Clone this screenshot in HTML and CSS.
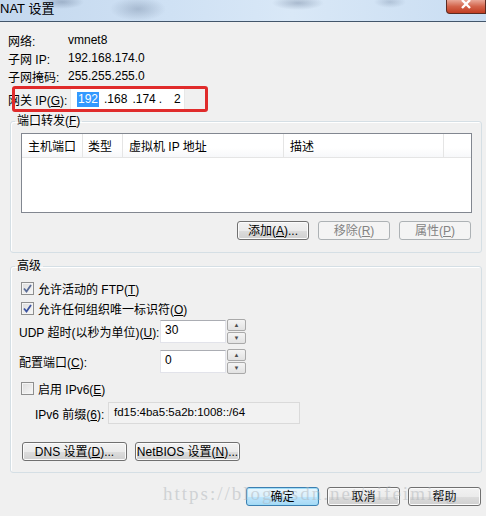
FILE: index.html
```html
<!DOCTYPE html>
<html lang="zh-CN">
<head>
    <meta charset="UTF-8">
    <title>NAT 设置</title>
    <link rel="stylesheet" href="styles.css">
</head>
<body>
    <div class="window">
        <div class="titlebar">
            <span class="title">NAT 设置</span>
            <span class="close">
                <svg width="12" height="9" viewBox="0 0 12 9"><path d="M2 0 L10 8 M10 0 L2 8" stroke="#fff" stroke-width="2.4" fill="none"/></svg>
            </span>
        </div>

        <div class="content">
            <div class="info">
                <div class="info-row"><span class="info-label">网络:</span><span>vmnet8</span></div>
                <div class="info-row"><span class="info-label">子网 IP:</span><span>192.168.174.0</span></div>
                <div class="info-row"><span class="info-label">子网掩码:</span><span>255.255.255.0</span></div>
                <div class="info-row gateway">
                    <span class="info-label">网关 IP(<u>G</u>):</span>
                    <div class="ip-box">
                        <span class="sel">192</span><span class="oct o2">.168</span><span class="oct o3">.174</span><span class="oct o4">.</span><span class="oct o5">2</span>
                    </div>
                    <div class="highlight"></div>
                </div>
            </div>

            <fieldset class="group forward">
                <legend>端口转发(<u>F</u>)</legend>
                <div class="listview">
                    <div class="list-head">
                        <span class="col c1">主机端口</span>
                        <span class="col c2">类型</span>
                        <span class="col c3">虚拟机 IP 地址</span>
                        <span class="col c4">描述</span>
                        <span class="col c5"></span>
                    </div>
                </div>
                <div class="btn-row">
                    <button class="btn">添加(<u>A</u>)...</button>
                    <button class="btn disabled">移除(<u>R</u>)</button>
                    <button class="btn disabled">属性(<u>P</u>)</button>
                </div>
            </fieldset>

            <fieldset class="group advanced">
                <legend>高级</legend>
                <div class="check-row">
                    <span class="checkbox">
                        <svg width="9" height="9" viewBox="0 0 9 9"><path d="M1 4.5 L3.5 7.5 L8 1" stroke="#5a6c96" stroke-width="1.8" fill="none"/></svg>
                    </span>
                    <span>允许活动的 FTP(<u>T</u>)</span>
                </div>
                <div class="check-row second">
                    <span class="checkbox">
                        <svg width="9" height="9" viewBox="0 0 9 9"><path d="M1 4.5 L3.5 7.5 L8 1" stroke="#3b53a0" stroke-width="1.8" fill="none"/></svg>
                    </span>
                    <span>允许任何组织唯一标识符(<u>O</u>)</span>
                </div>
                <div class="field-row udp">
                    <span class="field-label">UDP 超时(以秒为单位)(<u>U</u>):</span>
                    <span class="edit">30</span>
                    <span class="spinner"><span class="spin up">&#9650;</span><span class="spin down">&#9660;</span></span>
                </div>
                <div class="field-row port">
                    <span class="field-label">配置端口(<u>C</u>):</span>
                    <span class="edit">0</span>
                    <span class="spinner"><span class="spin up">&#9650;</span><span class="spin down">&#9660;</span></span>
                </div>
                <div class="check-row ipv6">
                    <span class="checkbox"></span>
                    <span>启用 IPv6(<u>E</u>)</span>
                </div>
                <div class="prefix-row">
                    <span class="prefix-label">IPv6 前缀(<u>6</u>):</span>
                    <span class="prefix-box">fd15:4ba5:5a2b:1008::/64</span>
                </div>
                <div class="dns-row">
                    <button class="btn wide">DNS 设置(<u>D</u>)...</button>
                    <button class="btn wide">NetBIOS 设置(<u>N</u>)...</button>
                </div>
            </fieldset>

            <div class="footer">
                <button class="btn default">确定</button>
                <button class="btn">取消</button>
                <button class="btn">帮助</button>
            </div>
        </div>

        <div class="watermark">https://blog.csdn.net/aifeiming</div>
    </div>
</body>
</html>
```

FILE: styles.css
```css
body {
    margin: 0;
    padding: 0;
    background-color: #f0f0f0;
    font-family: "Liberation Sans", "Noto Sans CJK SC", sans-serif;
    font-size: 12px;
    color: #000;
}
u {
    text-decoration: underline;
    text-underline-offset: 1px;
}
.window {
    position: relative;
    width: 486px;
    height: 516px;
    overflow: hidden;
}
.titlebar {
    height: 21px;
    border-bottom: 1px solid #43566b;
    display: flex;
    justify-content: space-between;
    align-items: flex-start;
    background:
        radial-gradient(ellipse 22px 7px at 62px 2px, rgba(80, 100, 130, 0.35), transparent),
        radial-gradient(ellipse 28px 12px at 138px 9px, rgba(80, 100, 130, 0.3), transparent),
        radial-gradient(ellipse 26px 7px at 298px 3px, rgba(80, 100, 130, 0.35), transparent),
        radial-gradient(ellipse 16px 6px at 390px 2px, rgba(80, 100, 130, 0.25), transparent),
        linear-gradient(90deg, #c4d8ee 0%, #cfe1f4 35%, #d9e8f7 60%, #c9ddf2 100%);
}
.title {
    font-size: 13px;
    line-height: 17px;
}
.close {
    width: 38px;
    height: 13px;
    border: 1px solid #5b2b22;
    border-top: none;
    border-radius: 0 0 0 4px;
    background: linear-gradient(#e9a898, #d3634a 50%, #c13d22);
    display: flex;
    justify-content: center;
    align-items: flex-start;
}
.content {
    padding: 0 4px 0 8px;
}
.info {
    padding-top: 9px;
}
.info-row {
    display: flex;
    align-items: center;
    height: 18px;
}
.info-label {
    width: 60px;
    flex-shrink: 0;
}
.gateway {
    position: relative;
    height: 22px;
    margin-top: 3px;
}
.ip-box {
    margin-left: 2px;
    width: 107px;
    height: 20px;
    border: 1px solid #e8e8e8;
    background: #fff;
    display: flex;
    align-items: center;
    padding-left: 6px;
}
.sel {
    background: #3399ff;
    color: #fff;
    padding: 0 1px;
    line-height: 15px;
}
.o2 { margin-left: 5px; }
.o3 { margin-left: 5px; }
.o4 { margin-left: 3px; }
.o5 { margin-left: 12px; }
.highlight {
    position: absolute;
    left: 4px;
    top: -2px;
    width: 196px;
    height: 26px;
    border: 3px solid #e02b2b;
    border-radius: 3px;
    box-sizing: border-box;
}
.group {
    margin: 0 0 0 2px;
    border: 1px solid #d5dfe5;
    border-radius: 3px;
    padding: 4px 4px 12px 4px;
    box-shadow: inset 1px 1px 0 #fff;
}
.group legend {
    padding: 0 2px;
    line-height: 16px;
}
.forward {
    margin-top: 3px;
}
.listview {
    margin: 0 5px 0 6px;
    height: 78px;
    border: 1px solid #828790;
    background: #fff;
}
.list-head {
    display: flex;
    height: 23px;
    border-bottom: 1px solid #e5e5e5;
    background: linear-gradient(#ffffff, #ffffff 60%, #f7f8fa);
}
.col {
    display: flex;
    align-items: center;
    padding-left: 6px;
    border-right: 1px solid #e5e5e5;
    box-sizing: border-box;
}
.c1 { width: 61px; }
.c2 { width: 40px; padding-left: 5px; }
.c3 { width: 161px; }
.c4 { width: 160px; }
.c5 { flex: 1; border-right: none; }
.btn {
    font-family: "Liberation Sans", "Noto Sans CJK SC", sans-serif;
    font-size: 12px;
    height: 19px;
    width: 72px;
    padding: 0;
    border: 1px solid #707070;
    border-radius: 3px;
    background: linear-gradient(#f2f2f2 0%, #ebebeb 50%, #dddddd 51%, #cfcfcf 100%);
    box-shadow: inset 0 0 0 1px #fbfbfb;
    color: #000;
    line-height: 16px;
}
.btn.disabled {
    border-color: #adb2b5;
    background: #f4f4f4;
    box-shadow: none;
    color: #838383;
}
.btn.default {
    border-color: #3c7fb1;
    box-shadow: inset 0 0 0 1px #9fdcf7;
    background: linear-gradient(#eaf6fd 0%, #d9f0fc 50%, #bee6fd 51%, #a7d9f5 100%);
}
.btn-row {
    display: flex;
    justify-content: flex-end;
    gap: 9px;
    margin: 8px 6px 0 0;
}
.advanced {
    margin-top: 5px;
    padding: 5px 4px 11px 4px;
}
.check-row {
    display: flex;
    align-items: center;
    height: 18px;
    margin-left: 6px;
    gap: 4px;
}
.check-row.second {
    margin-top: 2px;
}
.check-row.ipv6 {
    margin-top: 6px;
}
.checkbox {
    width: 11px;
    height: 11px;
    border: 1px solid #8e8f8f;
    background: linear-gradient(135deg, #dcdcdc, #f8f8f8);
    box-shadow: inset 0 0 0 1px #f4f4f4;
    display: flex;
    align-items: center;
    justify-content: center;
}
.field-row {
    display: flex;
    align-items: center;
    height: 23px;
    margin-left: 4px;
}
.field-row.udp {
    margin-top: 3px;
}
.field-row.port {
    margin-top: 7px;
}
.field-label {
    width: 141px;
    flex-shrink: 0;
}
.edit {
    width: 60px;
    height: 21px;
    border: 1px solid #e2e3ea;
    border-top-color: #abadb3;
    background: #fff;
    padding-left: 4px;
    line-height: 19px;
}
.spinner {
    margin-left: 1px;
    display: flex;
    flex-direction: column;
    gap: 1px;
}
.spin {
    width: 17px;
    height: 10px;
    border: 1px solid #a9a9a9;
    border-radius: 2px;
    background: linear-gradient(#f4f4f4, #e2e2e2);
    font-size: 6px;
    line-height: 10px;
    text-align: center;
    color: #4d4d4d;
}
.prefix-row {
    display: flex;
    align-items: center;
    height: 22px;
    margin: 5px 0 0 20px;
}
.prefix-label {
    width: 73px;
    flex-shrink: 0;
}
.prefix-box {
    width: 185px;
    height: 20px;
    border: 1px solid #dadada;
    background: #f2f2f2;
    padding-left: 5px;
    line-height: 19px;
    font-size: 11.5px;
}
.dns-row {
    display: flex;
    gap: 8px;
    margin: 18px 0 0 7px;
}
.btn.wide {
    width: 105px;
}
.footer {
    display: flex;
    justify-content: flex-end;
    gap: 8px;
    margin: 14px 1px 0 0;
}
.footer .btn {
    width: 73px;
}
.watermark {
    position: absolute;
    left: 163px;
    top: 483px;
    font-family: "Liberation Serif", serif;
    font-size: 19px;
    letter-spacing: 2px;
    color: rgba(175, 180, 185, 0.5);
    pointer-events: none;
    white-space: nowrap;
}
```
